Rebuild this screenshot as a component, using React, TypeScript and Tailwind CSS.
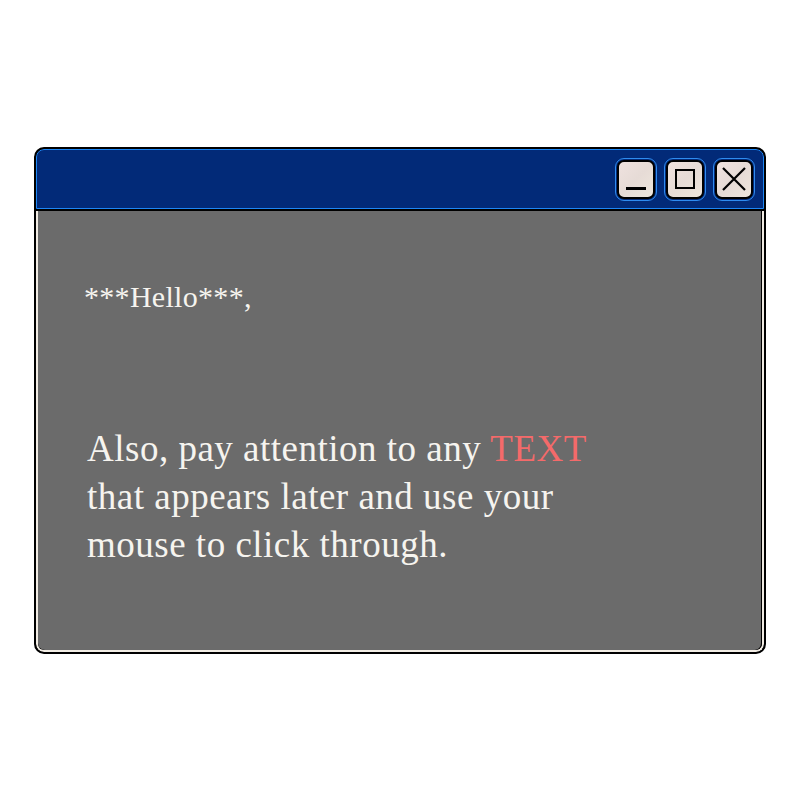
import React from 'react';

function WinButton({ children }: { children: React.ReactNode }) {
  return (
    <div className="rounded-[9px] border border-[#2f8cf0] p-px">
      <div className="flex h-[39px] w-[38px] items-center justify-center rounded-[7px] border-2 border-black bg-gradient-to-br from-[#efe2df] via-[#e6dbd6] to-[#eee6dc]">
        {children}
      </div>
    </div>
  );
}

export default function App() {
  return (
    <div className="h-[800px] w-[800px] bg-white pl-[34px] pt-[147px]">
      <div
        className="flex h-[507px] w-[732px] flex-col overflow-hidden rounded-[10px] border-2 border-black bg-black"
        style={{ fontFamily: '"Liberation Serif", "DejaVu Serif", serif' }}
      >
        {/* title bar */}
        <div className="flex h-[60px] items-center justify-end gap-[7px] rounded-t-[8px] border border-[#1d86f5] bg-[#022a78] pr-[8px]">
          <WinButton>
            <div className="mt-[19px] h-[3px] w-[20px] bg-black" />
          </WinButton>
          <WinButton>
            <div className="h-[20px] w-[20px] border-[2.5px] border-black" />
          </WinButton>
          <WinButton>
            <svg width="26" height="26" viewBox="0 0 26 26">
              <path d="M2 2 L24 24 M24 2 L2 24" stroke="black" strokeWidth="2.2" />
            </svg>
          </WinButton>
        </div>

        {/* body */}
        <div className="mt-[2px] flex-1 rounded-b-[8px] border-b-2 border-l-2 border-r-2 border-[#f1ece4] bg-black">
          <div className="h-full rounded-b-[7px] border-r border-black bg-[#6b6b6b] pl-[46px] pt-[71px] text-[#f6f4ef]">
            <div className="text-[30px] leading-[30px] tracking-[0.3px]">***Hello***,</div>
            <p className="mt-[113px] pl-[3px] text-[37px] leading-[48px] tracking-[0.5px]">
              Also, pay attention to any <span className="text-[#f46a6a]">TEXT</span>
              <br />
              that appears later and use your
              <br />
              mouse to click through.
            </p>
          </div>
        </div>
      </div>
    </div>
  );
}
